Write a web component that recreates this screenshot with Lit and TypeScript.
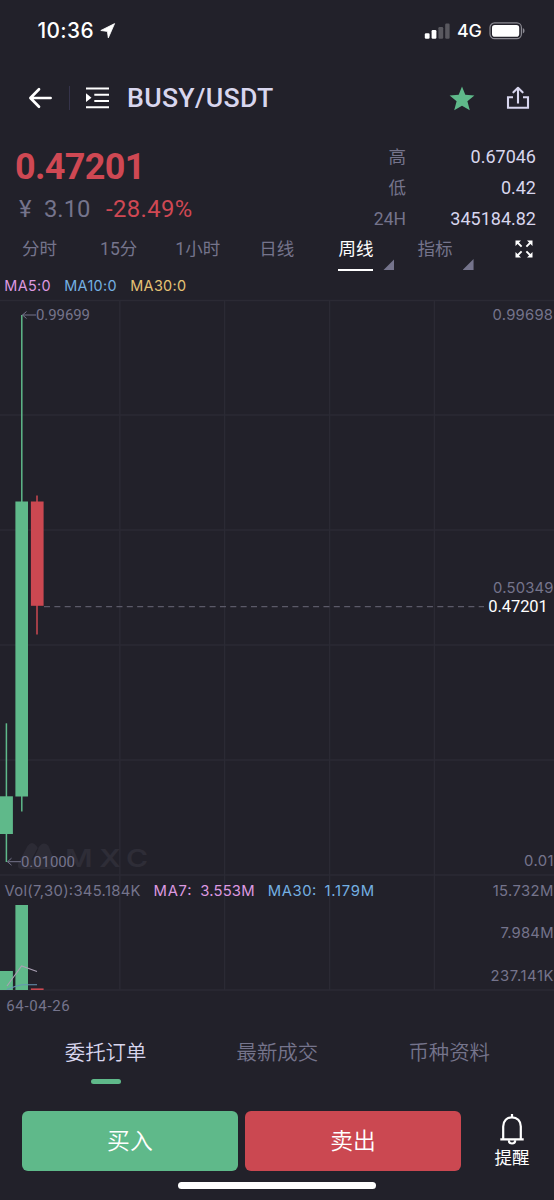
import { LitElement, html, svg, css } from "lit";
import { customElement, state } from "lit/decorators.js";
import { classMap } from "lit/directives/class-map.js";

interface Label {
  text: string;
  x: number;
  y: number;
  width: number;
  cls: string;
}

@customElement("status-bar")
class StatusBar extends LitElement {
  static styles = css`
    :host { display: flex; align-items: center; justify-content: space-between; height: 62px; padding: 0 29.5px 0 37.5px; color: #fff; font-family: Inter, sans-serif; box-sizing: border-box; }
    .side { display: flex; align-items: center; }
    .time { font-size: 20.8px; font-weight: 550; letter-spacing: 0.4px; line-height: 24px; }
    .loc { margin-left: 6px; }
    .net { font-size: 17.8px; font-weight: 450; margin: 0 7px 0 7px; letter-spacing: -0.2px; line-height: 22px; padding-bottom: 1px; }
    svg { display: block; }
  `;
  render() {
    return html`
      <div class="side">
        <span class="time">10:36</span>
        <svg class="loc" width="16" height="16" viewBox="0 0 16 16"><path d="M14.6.6 8.3 14.9 7.4 8.4.8 7.5z" fill="#fff" stroke="#fff" stroke-width=".8" stroke-linejoin="round" /></svg>
      </div>
      <div class="side">
        <svg width="26" height="16" viewBox="0 0 26 16" fill="#fff">
          <rect x=".8" y="10.2" width="4.8" height="5.6" rx="1.2" />
          <rect x="7.6" y="7" width="4.8" height="8.8" rx="1.2" />
          <rect x="14.4" y="4" width="4.8" height="11.8" rx="1.2" opacity=".25" />
          <rect x="21.2" y=".5" width="4.4" height="15.3" rx="1.2" opacity=".25" />
        </svg>
        <span class="net">4G</span>
        <svg width="36" height="18" viewBox="0 0 36 18">
          <rect x="1" y=".9" width="31.4" height="15.8" rx="4.6" fill="none" stroke="#8b8a92" stroke-width="1.2" />
          <rect x="3" y="2.9" width="27.2" height="11.8" rx="2.8" fill="#fff" />
          <path d="M33.8 6v5.4c1.1-.4 1.7-1.4 1.7-2.7s-.6-2.3-1.7-2.7z" fill="#8b8a92" />
        </svg>
      </div>`;
  }
}

@customElement("price-chart")
class PriceChart extends LitElement {
  static styles = css`
    :host { display: block; }
    svg { display: block; }
    text { font-family: Inter, sans-serif; font-size: 14.8px; fill: #75748c; }
    .roboto { font-family: Roboto, sans-serif; font-size: 15px; }
    .last { font-family: Roboto, sans-serif; font-size: 16.5px; fill: #fff; }
    .pink { fill: #dd99e0; }
    .blue { fill: #74b0e2; }
    .mark { font-size: 24px; font-weight: 600; fill: #2e2d37; }
    .grid { stroke: #2b2a34; stroke-width: 1.4; }
    .up { fill: #5fb98a; }
    .down { fill: #cb4851; }
    .arrow { stroke: #75748c; fill: none; stroke-width: 1; }
  `;

  private candles = [
    { x: 0, w: 12.9, wick: 6.4, top: 796.3, bottom: 834, high: 723.3, low: 862, vol: 971, cls: "up" },
    { x: 15.4, w: 12.6, wick: 21.8, top: 501.5, bottom: 796.5, high: 315, low: 811.5, vol: 905, cls: "up" },
    { x: 30.9, w: 12.7, wick: 37, top: 501.5, bottom: 605.8, high: 495.5, low: 634.5, vol: 988.4, cls: "down" },
  ];

  private labels: Label[] = [
    { text: "0.99699", x: 36, y: 320.3, width: 54, cls: "roboto" },
    { text: "0.01000", x: 21, y: 866.9, width: 54, cls: "roboto" },
    { text: "0.99698", x: 492.5, y: 320.3, width: 60.5, cls: "" },
    { text: "0.50349", x: 493, y: 593.4, width: 60.5, cls: "" },
    { text: "0.47201", x: 488.3, y: 612.4, width: 59.5, cls: "last" },
    { text: "0.01", x: 524, y: 866, width: 29.5, cls: "" },
    { text: "Vol(7,30):345.184K", x: 4.5, y: 895.6, width: 136, cls: "" },
    { text: "MA7:", x: 153.5, y: 895.6, width: 38, cls: "pink" },
    { text: "3.553M", x: 200.3, y: 895.6, width: 54.2, cls: "pink" },
    { text: "MA30:", x: 267.8, y: 895.6, width: 48.5, cls: "blue" },
    { text: "1.179M", x: 324.5, y: 895.6, width: 49.5, cls: "blue" },
    { text: "15.732M", x: 492.7, y: 895.6, width: 60.7, cls: "" },
    { text: "7.984M", x: 500.5, y: 938, width: 53, cls: "" },
    { text: "237.141K", x: 490.5, y: 980.7, width: 63, cls: "" },
    { text: "64-04-26", x: 6.2, y: 1011.4, width: 63.6, cls: "roboto" },
  ];

  render() {
    return html`<svg width="554" height="722" viewBox="0 299 554 722">
      ${[300.5, 415, 530, 645, 760, 875, 990].map((y) => svg`<line class="grid" x1="0" x2="554" y1=${y} y2=${y} />`)}
      ${[119.8, 224.6, 329.6, 434.4].map((x) => svg`<line class="grid" x1=${x} x2=${x} y1="300" y2="990" />`)}
      <g fill="#2c2b35">
        <path d="M18 864 27.500 846q4.500-6 9 0l1.500 2.500q5-8.500 10.500-2.500l6.500 16q2 7-5 7H22q-5 0-4-5z" />
        <path d="M38 848.500 32 860" stroke="#22212a" stroke-width="1.200" fill="none" />
        <text class="mark" transform="translate(65 866.800) scale(1.250 1)" x="0" y="0" textLength="66.500">MXC</text>
      </g>
      <line x1="44" x2="484" y1="606.6" y2="606.6" stroke="#5b5a68" stroke-width="1.2" stroke-dasharray="6 4.35" />
      ${this.candles.map((c) => svg`
        <rect class=${c.cls} x=${c.wick - 0.75} y=${c.high} width="1.5" height=${c.low - c.high} />
        <rect class=${c.cls} x=${c.x} y=${c.top} width=${c.w} height=${c.bottom - c.top} />
        <rect class=${c.cls} x=${c.x} y=${c.vol} width=${c.w} height=${990 - c.vol} />`)}
      <path d="M7 986 21.6 966 37 971.5" fill="none" stroke="#aaa0b4" stroke-width="1.1" />
      <path d="M7 989.5 15 986.5 22 984.7H37" fill="none" stroke="#6795b5" stroke-width="1.1" />
      <path class="arrow" d="M26.5 311.5 22.5 315 26.5 318.5M22.5 315H36M11.5 858.2 7.5 861.7 11.5 865.2M7.5 861.7H21" />
      ${this.labels.map((l) => svg`<text class=${l.cls} x=${l.x} y=${l.y} textLength=${l.width}>${l.text}</text>`)}
    </svg>`;
  }
}

@customElement("app-root")
class AppRoot extends LitElement {
  static styles = css`
    :host { display: flex; flex-direction: column; width: 554px; height: 1200px; overflow: hidden; background: #22212a; color: #75748c; font-family: Roboto, "Noto Sans CJK SC", sans-serif; }
    * { box-sizing: border-box; }
    svg { display: block; flex-shrink: 0; }
    .header { display: flex; align-items: center; height: 72px; padding: 0 24px 0 28px; }
    .divider { width: 1px; height: 24px; margin: 0 15px 0 16px; background: #35334a; }
    .pair { flex: 1; margin: 0 0 0 17px; font-size: 26.7px; line-height: 30px; font-weight: 460; color: #d8d6ee; letter-spacing: 0.3px; }
    .share { margin-left: 31px; }
    .ticker { display: flex; justify-content: space-between; height: 100px; padding: 7px 18px 0 15px; }
    .price { font-size: 36px; line-height: 53px; height: 52px; font-weight: 700; color: #cf4853; letter-spacing: -0.65px; }
    .change { display: flex; font-size: 23.8px; line-height: 32px; }
    .yen { width: 29px; padding-left: 4px; }
    .cny { width: 62px; }
    .pct { color: #cf4853; letter-spacing: 0.4px; }
    .stats { display: grid; grid-template-columns: 60px 130px; grid-auto-rows: 31px; text-align: right; font-size: 18px; line-height: 31px; }
    .key { font-size: 17.5px; font-weight: 399; padding-top: 1px; }
    .val { color: #d8d6ee; }
    .tabs { display: flex; height: 38px; }
    .tab { display: flex; justify-content: center; width: 79.1px; height: 37px; font-size: 17.5px; line-height: 30px; font-weight: 399; position: relative; }
    .tab span { height: 37px; }
    .tab.on { color: #fff; font-weight: 400; }
    .tab.on span { border-bottom: 2px solid #fff; }
    .corner { position: absolute; right: 1px; bottom: 1px; width: 11px; height: 11px; background: #75748c; clip-path: polygon(100% 0, 100% 100%, 0 100%); }
    .expand { margin: 6px 0 0 40.5px; }
    .ma { display: flex; gap: 13.3px; height: 27px; padding: 0 4.3px; align-items: center; font-family: Inter, sans-serif; font-size: 14.4px; letter-spacing: 0.35px; }
    .pink { color: #dd99e0; }
    .blue { color: #74b0e2; }
    .gold { color: #e6c375; }
    .sections { display: grid; grid-template-columns: repeat(3, 171.8px); height: 90px; padding: 14px 0 0 19.7px; font-size: 20.4px; line-height: 36px; font-weight: 350; text-align: center; }
    .section.on { color: #d8d6ee; }
    .section.on::after { content: ""; display: block; width: 30px; height: 5px; margin: 8px auto 0; border-radius: 3px; background: #5fb98a; }
    .actions { display: flex; gap: 7.3px; height: 60px; padding-left: 22px; }
    .action { width: 215.8px; border-radius: 6px; color: #fff; font-size: 22.8px; line-height: 61px; font-weight: 350; text-align: center; }
    .buy { background: #5fb98a; }
    .sell { background: #cb4851; }
    .alert { flex: 1; display: flex; flex-direction: column; align-items: center; padding: 2px 0 0 2px; color: #fff; font-size: 17.5px; line-height: 26px; }
    .home { width: 198px; height: 7px; margin: 11px auto 0; border-radius: 4px; background: #fff; }
  `;

  @state() private period = "周线";
  @state() private section = "委托订单";

  render() {
    const periods = ["分时", "15分", "1小时", "日线", "周线", "指标"];
    const stats = [["高", "0.67046"], ["低", "0.42"], ["24H", "345184.82"]];
    return html`
      <status-bar></status-bar>
      <div class="header">
        <svg width="25" height="22" viewBox="0 0 25 22" fill="none" stroke="#fff" stroke-width="2.7" stroke-linecap="round" stroke-linejoin="round"><path d="M11 2.3 2.4 11 11 19.700M3 11h19.600" /></svg>
        <div class="divider"></div>
        <svg width="25" height="22" viewBox="0 0 25 22" fill="#fff"><path d="M1 .4h23v2H1zM9.3 6.7H24v2H9.3zM9.3 12.9H24v2H9.3zM1 19.2h23v2H1zM1 6.3 6.5 10.7 1 15.1z" /></svg>
        <div class="pair">BUSY/USDT</div>
        <svg width="26" height="25" viewBox="0 0 26 25"><path d="M13 .5 16.3 8.7 25.4 9.5 18.4 15.2 20.8 24.3 13 19.7 5.2 24.3 7.6 15.2.6 9.5 9.7 8.7z" fill="#5fb98a" /></svg>
        <svg class="share" width="24" height="24" viewBox="0 0 24 24" fill="none" stroke="#d8d6ee" stroke-width="2.1"><path d="M7 11.3H2v10.5h20V11.3h-5M12 17.6V2.2" /><path d="M7.4 6.3 12 1.8l4.6 4.5" stroke-linecap="round" stroke-linejoin="round" /></svg>
      </div>
      <div class="ticker">
        <div>
          <div class="price">0.47201</div>
          <div class="change"><span class="yen">¥</span><span class="cny">3.10</span><span class="pct">-28.49%</span></div>
        </div>
        <div class="stats">${stats.map(([k, v]) => html`<span class="key">${k}</span><span class="val">${v}</span>`)}</div>
      </div>
      <div class="tabs">
        ${periods.map((p, i) => html`<div class=${classMap({ tab: true, on: p === this.period })} @click=${() => (this.period = p)}><span>${p}</span>${i > 3 ? html`<i class="corner"></i>` : ""}</div>`)}
        <svg class="expand" width="18" height="18" viewBox="0 0 18 18" fill="#fff" stroke="#fff" stroke-width="1.9">
          <path d="M2 2 6.600 6.600M16 2 11.400 6.600M2 16 6.600 11.400M16 16 11.400 11.400" />
          <path stroke="none" d="M.5.5H6L.5 6zM17.5.5V6L12 .5zM.5 17.5V12L6 17.5zM17.5 17.5H12L17.5 12z" />
        </svg>
      </div>
      <div class="ma"><span class="pink">MA5:0</span><span class="blue">MA10:0</span><span class="gold">MA30:0</span></div>
      <price-chart></price-chart>
      <div class="sections">
        ${["委托订单", "最新成交", "币种资料"].map((s) => html`<div class=${classMap({ section: true, on: s === this.section })} @click=${() => (this.section = s)}>${s}</div>`)}
      </div>
      <div class="actions">
        <div class="action buy">买入</div>
        <div class="action sell">卖出</div>
        <div class="alert">
          <svg width="26" height="32" viewBox="0 0 26 32" fill="none" stroke="#fff" stroke-width="2.2"><path d="M4.2 26V13.5C4.2 8 8 4.3 13 4.3s8.8 3.7 8.8 9.2V26M1.3 26.3h23.4M13 4V1" /><path d="M9.8 27.2c0 4.4 6.4 4.4 6.4 0" /></svg>
          <span>提醒</span>
        </div>
      </div>
      <div class="home"></div>`;
  }
}
